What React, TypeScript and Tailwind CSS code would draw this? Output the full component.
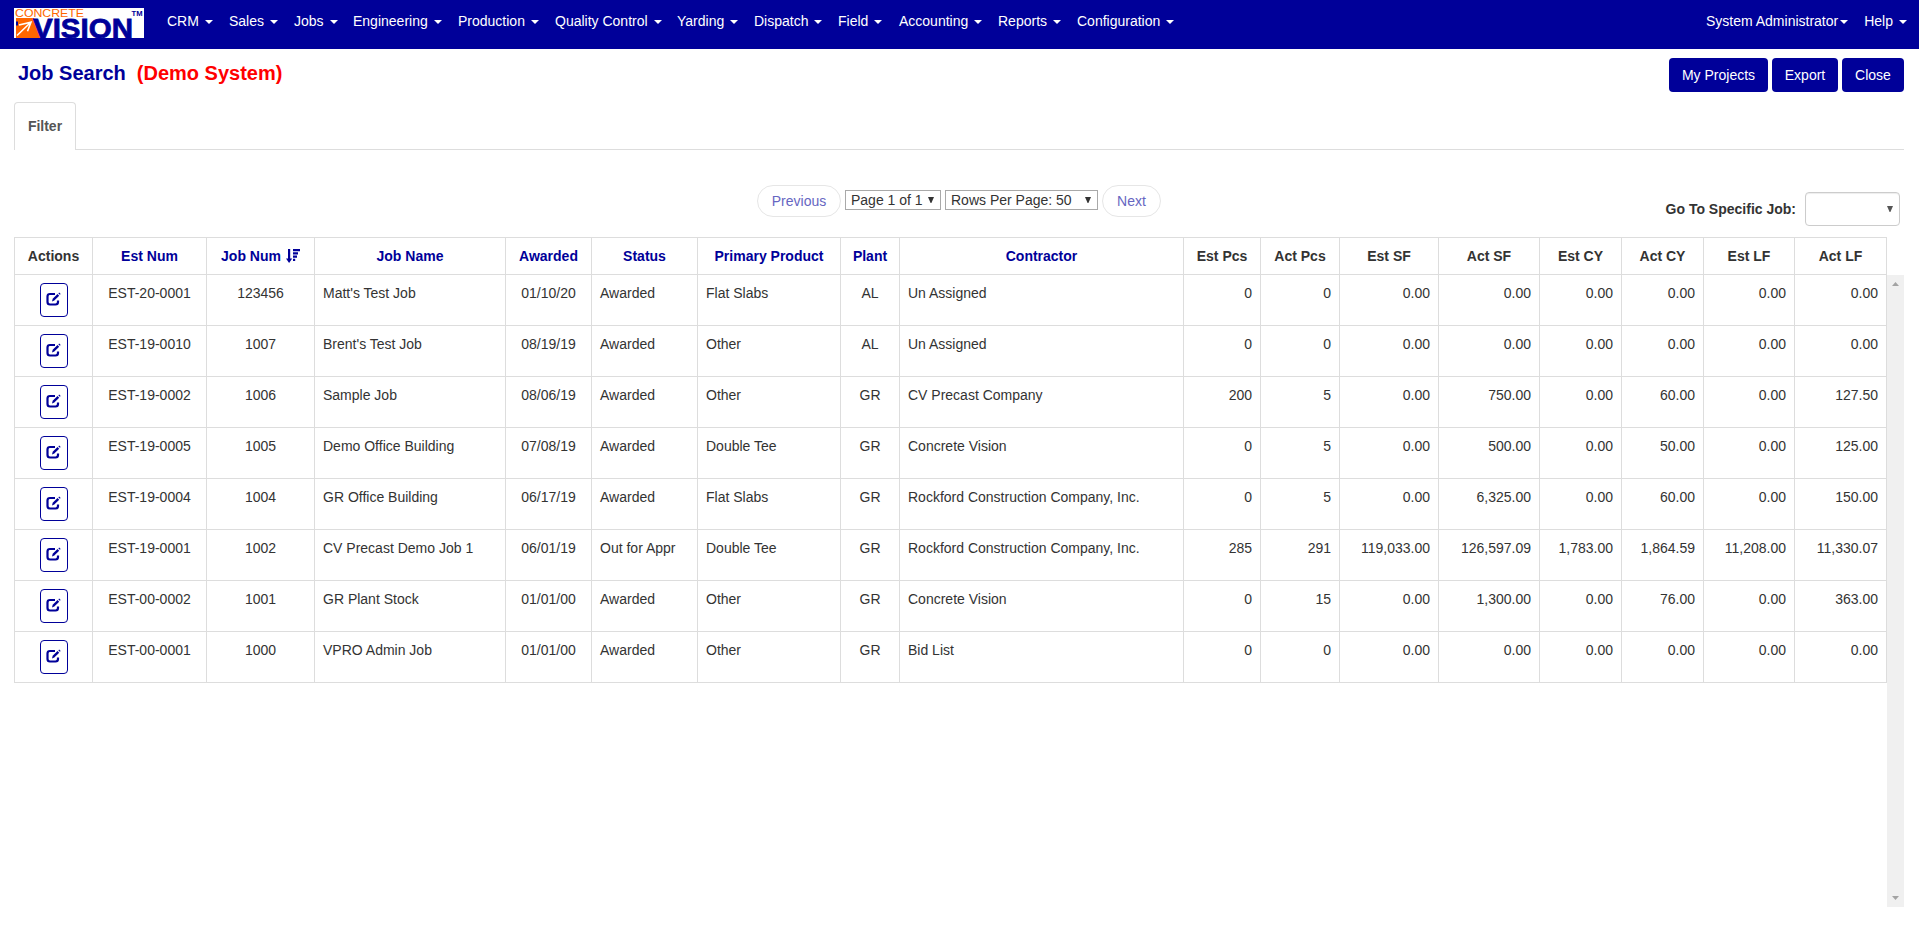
import React from "react";

type Align = "left" | "center" | "right";

interface Column {
  label: string;
  width: string;
  align: Align;
  sortable: boolean;
  sorted?: boolean;
}

const columns: Column[] = [
  { label: "Actions", width: "w-[78px]", align: "center", sortable: false },
  { label: "Est Num", width: "w-[114px]", align: "center", sortable: true },
  { label: "Job Num", width: "w-[108px]", align: "center", sortable: true, sorted: true },
  { label: "Job Name", width: "w-[191px]", align: "left", sortable: true },
  { label: "Awarded", width: "w-[86px]", align: "center", sortable: true },
  { label: "Status", width: "w-[106px]", align: "left", sortable: true },
  { label: "Primary Product", width: "w-[143px]", align: "left", sortable: true },
  { label: "Plant", width: "w-[59px]", align: "center", sortable: true },
  { label: "Contractor", width: "w-[284px]", align: "left", sortable: true },
  { label: "Est Pcs", width: "w-[77px]", align: "right", sortable: false },
  { label: "Act Pcs", width: "w-[79px]", align: "right", sortable: false },
  { label: "Est SF", width: "w-[99px]", align: "right", sortable: false },
  { label: "Act SF", width: "w-[101px]", align: "right", sortable: false },
  { label: "Est CY", width: "w-[82px]", align: "right", sortable: false },
  { label: "Act CY", width: "w-[82px]", align: "right", sortable: false },
  { label: "Est LF", width: "w-[91px]", align: "right", sortable: false },
  { label: "Act LF", width: "w-[92px]", align: "right", sortable: false },
];

const rows: string[][] = [
  ["EST-20-0001", "123456", "Matt's Test Job", "01/10/20", "Awarded", "Flat Slabs", "AL", "Un Assigned", "0", "0", "0.00", "0.00", "0.00", "0.00", "0.00", "0.00"],
  ["EST-19-0010", "1007", "Brent's Test Job", "08/19/19", "Awarded", "Other", "AL", "Un Assigned", "0", "0", "0.00", "0.00", "0.00", "0.00", "0.00", "0.00"],
  ["EST-19-0002", "1006", "Sample Job", "08/06/19", "Awarded", "Other", "GR", "CV Precast Company", "200", "5", "0.00", "750.00", "0.00", "60.00", "0.00", "127.50"],
  ["EST-19-0005", "1005", "Demo Office Building", "07/08/19", "Awarded", "Double Tee", "GR", "Concrete Vision", "0", "5", "0.00", "500.00", "0.00", "50.00", "0.00", "125.00"],
  ["EST-19-0004", "1004", "GR Office Building", "06/17/19", "Awarded", "Flat Slabs", "GR", "Rockford Construction Company, Inc.", "0", "5", "0.00", "6,325.00", "0.00", "60.00", "0.00", "150.00"],
  ["EST-19-0001", "1002", "CV Precast Demo Job 1", "06/01/19", "Out for Appr", "Double Tee", "GR", "Rockford Construction Company, Inc.", "285", "291", "119,033.00", "126,597.09", "1,783.00", "1,864.59", "11,208.00", "11,330.07"],
  ["EST-00-0002", "1001", "GR Plant Stock", "01/01/00", "Awarded", "Other", "GR", "Concrete Vision", "0", "15", "0.00", "1,300.00", "0.00", "76.00", "0.00", "363.00"],
  ["EST-00-0001", "1000", "VPRO Admin Job", "01/01/00", "Awarded", "Other", "GR", "Bid List", "0", "0", "0.00", "0.00", "0.00", "0.00", "0.00", "0.00"],
];

const menu = [
  { label: "CRM", width: "w-[62px]" },
  { label: "Sales", width: "w-[65px]" },
  { label: "Jobs", width: "w-[59px]" },
  { label: "Engineering", width: "w-[105px]" },
  { label: "Production", width: "w-[97px]" },
  { label: "Quality Control", width: "w-[122px]" },
  { label: "Yarding", width: "w-[77px]" },
  { label: "Dispatch", width: "w-[84px]" },
  { label: "Field", width: "w-[61px]" },
  { label: "Accounting", width: "w-[99px]" },
  { label: "Reports", width: "w-[79px]" },
  { label: "Configuration", width: "w-[112px]" },
];

const alignClass: Record<Align, string> = {
  left: "text-left",
  center: "text-center",
  right: "text-right",
};

function Caret({ className = "ml-1.5" }: { className?: string }) {
  return (
    <svg className={`mt-px h-1 w-2 shrink-0 ${className}`} viewBox="0 0 8 4" fill="currentColor" aria-hidden="true">
      <path d="M0 0h8L4 4z" />
    </svg>
  );
}

function Logo() {
  return (
    <svg className="block overflow-visible" width="130" height="30" viewBox="0 0 130 30" aria-label="Concrete Vision">
      <rect width="130" height="30" fill="#fff" />
      <text x="1" y="8.8" fontSize="11.5" fill="#f60" textLength="69" lengthAdjust="spacingAndGlyphs">
        CONCRETE
      </text>
      <path d="M2 10h18l7 20H2z" fill="#f60" />
      <path d="M2 13.5h2v4H2z" fill="#000099" />
      <text
        x="19"
        y="29.5"
        fontSize="28.5"
        fontWeight="700"
        fill="#000099"
        stroke="#000099"
        strokeWidth="0.8"
        textLength="100"
        lengthAdjust="spacingAndGlyphs"
      >
        VISION
      </text>
      <path d="M3 27.5L16 15M5 17L17 14.200l-3.500 9" fill="none" stroke="#fff" strokeWidth="1.6" />
      <text x="117.5" y="8.2" fontSize="6.5" fontWeight="700" fill="#000099" textLength="11" lengthAdjust="spacingAndGlyphs">
        TM
      </text>
    </svg>
  );
}

function EditIcon() {
  return (
    <svg className="mb-0.5" width="15" height="14" viewBox="0 0 15 14" fill="none" aria-hidden="true">
      <path d="M9 2H4Q1.5 2 1.5 4.5V10q0 2.5 2.5 2.5h5.5Q12 12.500 12 10V8.500" stroke="#000099" strokeWidth="2.2" />
      <path d="M6 9.500l.7-2.700L11.500 2l1.700 1.700-4.900 4.900z" fill="#000099" />
      <path d="M12.300 1.300l.9-.9 1.500 1.500-.9.9z" fill="#000099" />
    </svg>
  );
}

function SortIcon() {
  return (
    <svg className="-mt-px -mr-px ml-[5px] h-[14px] w-[15px]" viewBox="0 0 15 14" fill="#000099" aria-hidden="true">
      <path d="M2 0h2.200v9.500h2L3.100 14 0 9.500h2zM7 0h7v2.200H7zM7 3.300h5v2.200H7zM7 6.600h4v2.200H7zM7 9.800h2.200V12H7z" />
    </svg>
  );
}

function NavBar() {
  return (
    <nav className="flex h-[49px] shrink-0 items-start bg-[#000099] pl-[14px] pr-3 text-sm text-white">
      <div className="pt-2">
        <Logo />
      </div>
      <ul className="ml-[23px] flex pt-[11px] leading-5">
        {menu.map((item) => (
          <li key={item.label} className={`flex items-center whitespace-nowrap ${item.width}`}>
            {item.label}
            <Caret />
          </li>
        ))}
      </ul>
      <ul className="ml-auto flex gap-4 pt-[11px] leading-5">
        <li className="flex items-center">
          System Administrator
          <Caret className="ml-0.5" />
        </li>
        <li className="flex items-center">
          Help
          <Caret />
        </li>
      </ul>
    </nav>
  );
}

function TitleBar() {
  return (
    <div className="flex h-[53px] items-start justify-between pt-[9px]">
      <h1 className="flex gap-[11px] pt-px pl-1 text-xl leading-7 font-bold whitespace-nowrap text-[#000099]">
        Job Search <span className="text-[#ff0000]">(Demo System)</span>
      </h1>
      <div className="flex gap-1 text-sm text-white">
        <button className="h-[34px] w-[99px] rounded bg-[#000099]">My Projects</button>
        <button className="h-[34px] w-[66px] rounded bg-[#000099]">Export</button>
        <button className="h-[34px] w-[62px] rounded bg-[#000099]">Close</button>
      </div>
    </div>
  );
}

function SelectArrow() {
  return (
    <svg className="ml-auto h-[6px] w-[6px]" viewBox="0 0 6 6" fill="currentColor" aria-hidden="true">
      <path d="M0 0h6L3.4 6h-.8z" />
    </svg>
  );
}

function Pager() {
  return (
    <div className="grid h-[87px] grid-cols-3 text-sm">
      <div />
      <div className="flex items-start justify-center gap-1 pt-[35px]">
        <button className="h-8 w-[84px] rounded-full border border-[#e6e6e6] text-[#6666c2]">Previous</button>
        <div className="mt-[5px] flex h-5 w-24 items-center border border-[#a9a9a9] pr-1.5 pl-[5px] whitespace-nowrap">
          Page 1 of 1
          <SelectArrow />
        </div>
        <div className="mt-[5px] flex h-5 w-[153px] items-center border border-[#a9a9a9] pr-1.5 pl-[5px] whitespace-nowrap">
          Rows Per Page: 50
          <SelectArrow />
        </div>
        <button className="h-8 w-[59px] rounded-full border border-[#e6e6e6] text-[#6666c2]">Next</button>
      </div>
      <div className="flex items-start justify-end gap-[9px] pt-[42px] pr-1">
        <label className="pt-[7px] leading-5 font-bold">Go To Specific Job:</label>
        <div className="flex h-[34px] w-[95px] items-center rounded border border-[#ccc] pr-1.5 text-[#555] shadow-[inset_0_1px_1px_rgba(0,0,0,0.075)]">
          <SelectArrow />
        </div>
      </div>
    </div>
  );
}

function JobTable() {
  return (
    <table className="w-[1873px] table-fixed border-collapse text-sm leading-5">
      <colgroup>
        {columns.map((column) => (
          <col key={column.label} className={column.width} />
        ))}
      </colgroup>
      <thead>
        <tr className="h-[37px]">
          {columns.map((column) => (
            <th
              key={column.label}
              className={`border border-[#ddd] p-0 text-center font-bold whitespace-nowrap ${column.sortable ? "text-[#000099]" : "text-[#333]"}`}
            >
              <span className="inline-flex items-center">
                {column.label}
                {column.sorted && <SortIcon />}
              </span>
            </th>
          ))}
        </tr>
      </thead>
      <tbody>
        {rows.map((row) => (
          <tr key={row[0]} className="h-[51px]">
            <td className="border border-[#ddd] p-0 pt-2 align-top">
              <button className="mx-auto flex h-[34px] w-7 items-center justify-center rounded border border-[#000099]">
                <EditIcon />
              </button>
            </td>
            {row.map((value, i) => (
              <td
                key={i}
                className={`border border-[#ddd] px-2 pt-2 pb-0 align-top whitespace-nowrap ${alignClass[columns[i + 1].align]}`}
              >
                {value}
              </td>
            ))}
          </tr>
        ))}
      </tbody>
    </table>
  );
}

function ScrollTrack() {
  return (
    <div className="mt-[38px] flex h-[632px] w-[17px] flex-col items-center justify-between bg-[#f0f0f0] py-[7px] text-[#a3a3a3]">
      <svg width="7" height="4" viewBox="0 0 7 4" fill="currentColor" aria-hidden="true">
        <path d="M0 4h7L3.5 0z" />
      </svg>
      <svg width="7" height="4" viewBox="0 0 7 4" fill="currentColor" aria-hidden="true">
        <path d="M0 0h7L3.5 4z" />
      </svg>
    </div>
  );
}

export default function App() {
  return (
    <div className="flex h-[925px] w-[1919px] flex-col overflow-hidden bg-white font-['Liberation_Sans',Arial,sans-serif] text-[#333]">
      <NavBar />
      <main className="pr-[15px] pl-[14px]">
        <TitleBar />
        <div className="flex h-12 border-b border-[#ddd]">
          <div className="-mb-px flex h-12 w-[62px] items-center justify-center rounded-t border border-b-0 border-[#ddd] bg-white pb-px text-sm font-bold text-[#555]">
            Filter
          </div>
        </div>
        <Pager />
        <div className="flex items-start">
          <JobTable />
          <ScrollTrack />
        </div>
      </main>
    </div>
  );
}
